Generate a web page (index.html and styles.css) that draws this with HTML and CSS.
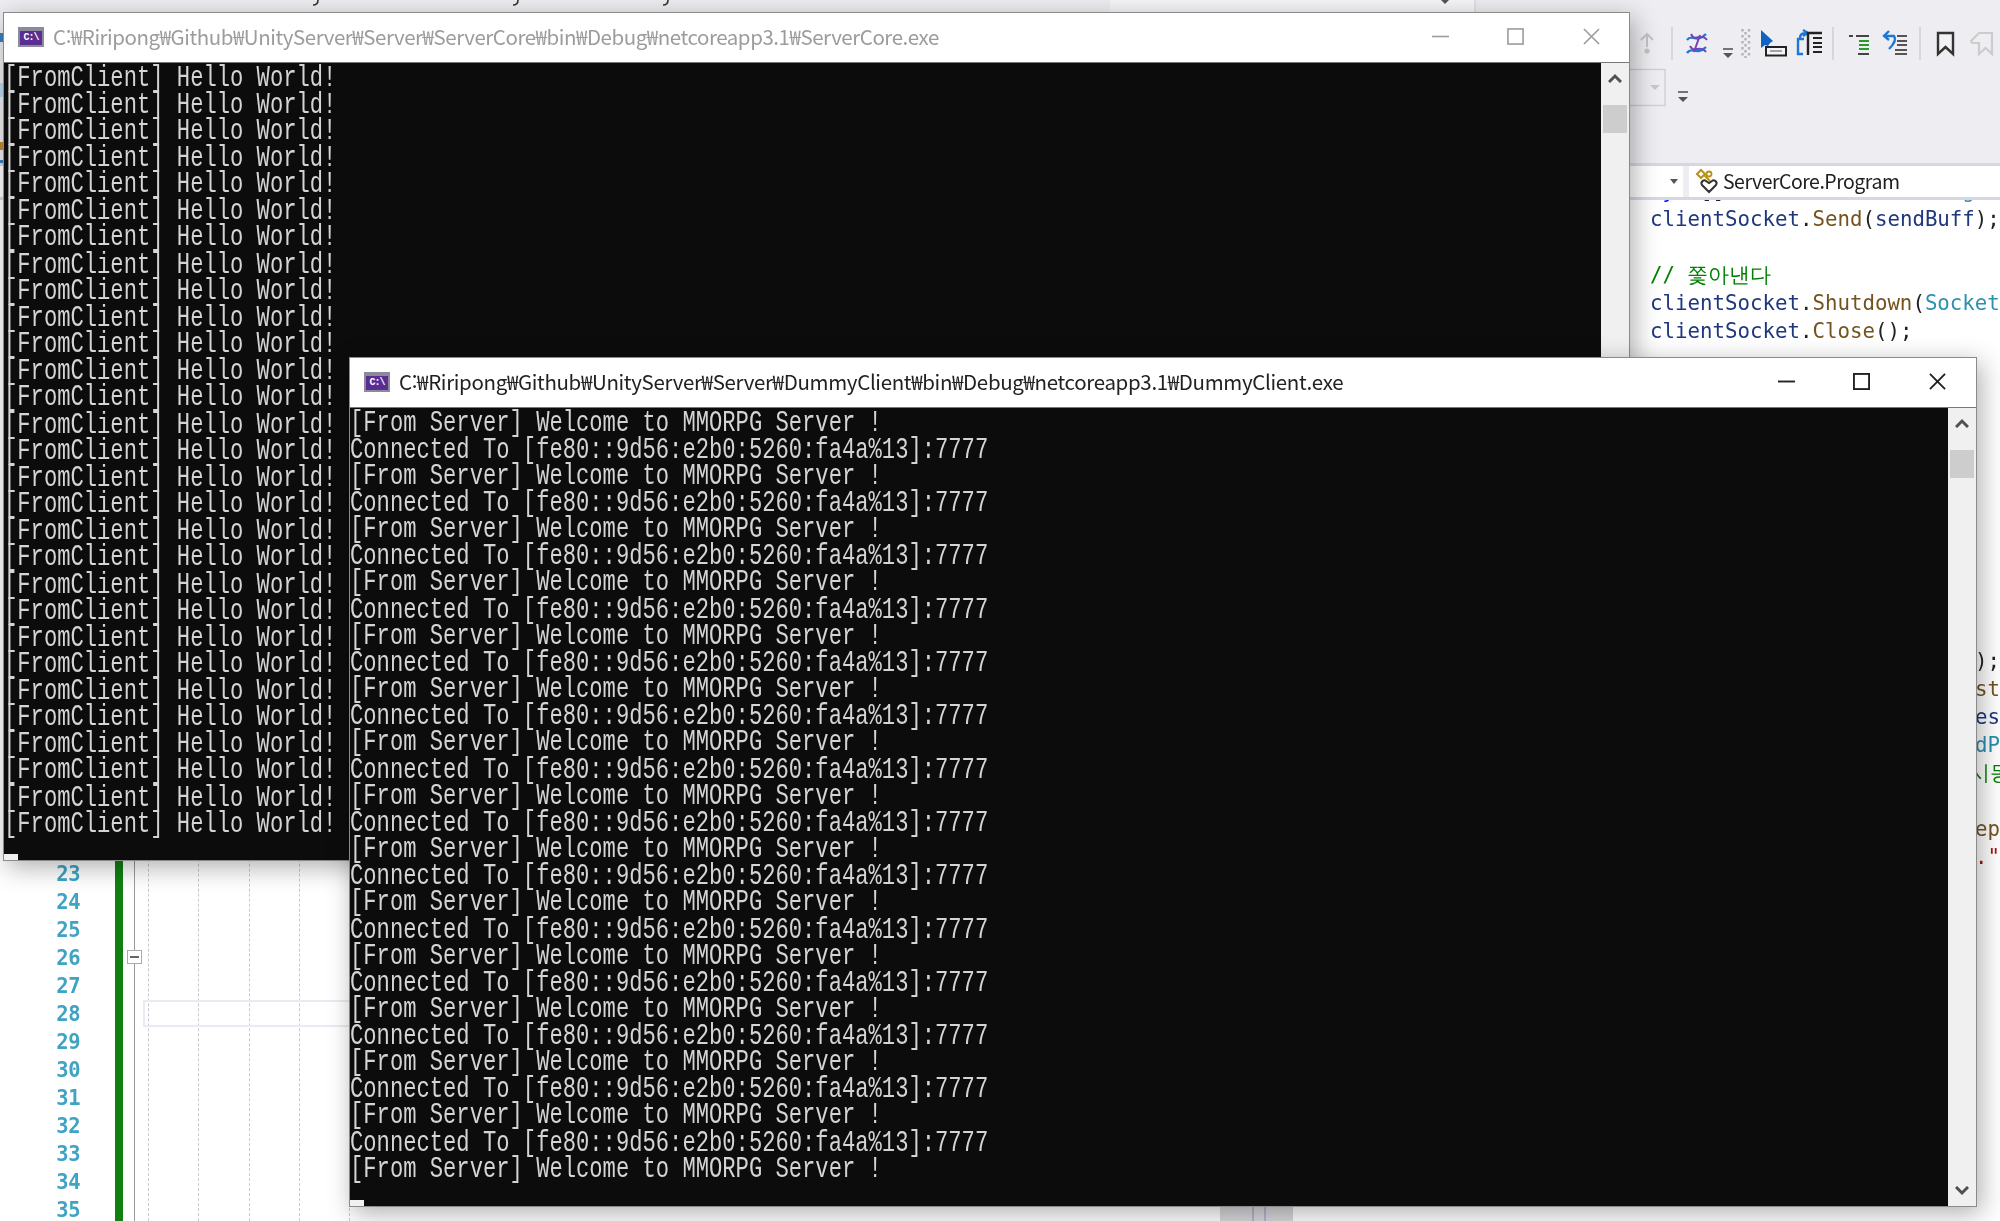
FILE: index.html
```html
<!DOCTYPE html>
<html lang="ko">
<head>
<meta charset="utf-8">
<title>ServerCore and DummyClient</title>
<link rel="stylesheet" href="styles.css">
</head>
<body>
<div class="ide">
  <svg class="menu-strip" viewBox="0 0 2000 12" aria-hidden="true">
    <rect x="1110" y="0" width="365" height="12" fill="#f6f6f8"/>
    <line x1="1475" y1="0" x2="1475" y2="12" stroke="#cfd0dc"/>
    <path d="M1441 0h8l-4 4z" fill="#555"/>
    <path d="M318 0c0 4-2 5-5 5M518 0c0 4-2 5-5 5M668 0c0 4-2 5-5 5" fill="none" stroke="#333" stroke-width="1.6"/>
  </svg>
  <div class="toolbars">
    <svg class="tool-icons" viewBox="1630 12 370 151" aria-hidden="true">
      <path d="M1647 47V34M1641 40l6-6 6 6" fill="none" stroke="#c4c4c8" stroke-width="2"/>
      <circle cx="1647" cy="51" r="2.6" fill="#c4c4c8"/>
      <line x1="1672" y1="27" x2="1672" y2="60" stroke="#ccced8" stroke-width="1.5"/>
      <path d="M1687 40c5-7 9 4 19-6M1687 53c5-7 10 3 19-6" fill="none" stroke="#1c78d4" stroke-width="2.4"/>
      <path d="M1691 34c4 9 10-2 16 6M1690 46c4 8 10-2 16 6M1700 35l-6 17" fill="none" stroke="#7b3fb6" stroke-width="2"/>
      <path d="M1723 49h10" stroke="#555" stroke-width="1.6"/>
      <path d="M1723 53h10l-5 5z" fill="#555"/>
      <g fill="none" stroke="#b4b4b8" stroke-width="2.4" stroke-dasharray="2.4 3.6">
        <line x1="1742.5" y1="29" x2="1742.5" y2="58"/>
        <line x1="1745.5" y1="32" x2="1745.5" y2="58"/>
        <line x1="1749" y1="29" x2="1749" y2="58"/>
      </g>
      <path d="M1761 30v18l4-3 3 1 2-3 3-2z" fill="#0e63c4"/>
      <rect x="1766" y="47" width="20" height="8.5" fill="#f4f4f6" stroke="#222" stroke-width="2"/>
      <line x1="1770" y1="51" x2="1782" y2="51" stroke="#888" stroke-width="1.5"/>
      <path d="M1804 39h-6v15h5M1800 38c0-3 2-5 6-5M1803 30l5 3-5 3" fill="none" stroke="#1c78d4" stroke-width="2.4"/>
      <path d="M1822 33h-14v22" fill="none" stroke="#222" stroke-width="2.4"/>
      <path d="M1813 38h9M1813 43h9M1813 47h9M1813 52h9" stroke="#222" stroke-width="2"/>
      <path d="M1849 36h4M1856 36h13M1858 54h11M1858 49.5h0" stroke="#444" stroke-width="2"/>
      <path d="M1859 41h10M1859 45h10M1859 49h10" stroke="#2a9a2a" stroke-width="2.2"/>
      <path d="M1885 36h9c3 4-1 9-5 13M1889 31l-5 5 5 4" fill="none" stroke="#1c78d4" stroke-width="2.4"/>
      <path d="M1897 36h10M1897 41h10M1897 45h10M1895 50h12M1895 54h12" stroke="#555" stroke-width="1.9"/>
      <line x1="1833" y1="27" x2="1833" y2="60" stroke="#ccced8" stroke-width="1.5"/>
      <line x1="1920" y1="27" x2="1920" y2="60" stroke="#ccced8" stroke-width="1.5"/>
      <path d="M1938 33h15v21l-7.5-7-7.500 7z" fill="#f2f2f5" stroke="#333" stroke-width="2.4"/>
      <path d="M1979 33h13v21l-6.500-6-6.500 6V43h-7l-1-2z" fill="none" stroke="#ccc" stroke-width="2.2"/>
      <rect x="1625" y="69.500" width="40" height="36" fill="none" stroke="#ccced8" stroke-width="1.4"/>
      <path d="M1650 85h10l-5 5z" fill="#c4c8d4"/>
      <path d="M1678 92h10" stroke="#555" stroke-width="1.6"/>
      <path d="M1678 97h10l-5 5z" fill="#555"/>
    </svg>
  </div>
  <div class="navbar">
    <div class="nav-cell nav-left"><span class="nav-caret"></span></div>
    <div class="nav-cell nav-right">
      <svg class="nav-icon" viewBox="0 0 24 26" aria-hidden="true">
        <path d="M2 6l4-4 4 4-4 4zM9 7l6 6" fill="none" stroke="#b8901c" stroke-width="2"/>
        <circle cx="14" cy="6" r="2.500" fill="none" stroke="#b8901c" stroke-width="1.800"/>
        <path d="M14 24l-7-7c-2-3 2-6 4-4l3 2 3-2c2-2 6 1 4 4z" fill="#fff" stroke="#333" stroke-width="2"/>
      </svg>
      <span class="nav-label">ServerCore.Program</span>
    </div>
  </div>
  <div class="editor">
    <div class="gutter">
      <div class="ln">23</div><div class="ln">24</div><div class="ln">25</div><div class="ln">26</div><div class="ln">27</div><div class="ln">28</div><div class="ln">29</div><div class="ln">30</div><div class="ln">31</div><div class="ln">32</div><div class="ln">33</div><div class="ln">34</div><div class="ln">35</div>
    </div>
    <div class="changebar"></div>
    <div class="fold"><span class="fold-box"></span></div>
    <div class="guides">
      <div class="guide"></div><div class="guide"></div><div class="guide"></div><div class="guide"></div><div class="guide guide-last"></div>
      <div class="current-line"></div>
    </div>
    <div class="splitter"><span class="split-line"></span><span class="split-line"></span></div>
    <div class="code">
      <div class="code-head">
        <div class="cl-clip"><span><span class="k">byte</span>[] <span class="v">sendBuff</span> = <span class="t">Encoding</span></span></div>
        <div class="cl"><span class="v">clientSocket</span>.<span class="m">Send</span>(<span class="v">sendBuff</span>);</div>
        <div class="cl"></div>
        <div class="cl c">// 쫓아낸다</div>
        <div class="cl"><span class="v">clientSocket</span>.<span class="m">Shutdown</span>(<span class="t">Socket</span></div>
        <div class="cl"><span class="v">clientSocket</span>.<span class="m">Close</span>();</div>
      </div>
      <div class="code-tail">
        <div class="cl">);</div>
        <div class="cl m">st</div>
        <div class="cl v">es</div>
        <div class="cl t">dP</div>
        <div class="cl c cl-kr">시동</div>
        <div class="cl"></div>
        <div class="cl m">ep</div>
        <div class="cl s">."</div>
      </div>
    </div>
  </div>
</div>

<section class="console win-server">
  <header class="titlebar">
    <span class="cmd-icon"><span class="cmd-glyph">C:\</span></span>
    <span class="win-title">C:₩Riripong₩Github₩UnityServer₩Server₩ServerCore₩bin₩Debug₩netcoreapp3.1₩ServerCore.exe</span>
    <div class="win-controls">
      <span class="win-btn"><svg viewBox="0 0 18 18" aria-hidden="true"><path d="M0 9h18"/></svg></span>
      <span class="win-btn"><svg viewBox="0 0 18 18" aria-hidden="true"><rect x="1" y="1" width="16" height="16"/></svg></span>
      <span class="win-btn"><svg viewBox="0 0 18 18" aria-hidden="true"><path d="M1 1l16 16M17 1L1 17"/></svg></span>
    </div>
  </header>
  <div class="win-body">
    <div class="screen">
      <div class="log">
        <div>[FromClient] Hello World!</div><div>[FromClient] Hello World!</div><div>[FromClient] Hello World!</div><div>[FromClient] Hello World!</div><div>[FromClient] Hello World!</div><div>[FromClient] Hello World!</div><div>[FromClient] Hello World!</div><div>[FromClient] Hello World!</div><div>[FromClient] Hello World!</div><div>[FromClient] Hello World!</div><div>[FromClient] Hello World!</div><div>[FromClient] Hello World!</div><div>[FromClient] Hello World!</div><div>[FromClient] Hello World!</div><div>[FromClient] Hello World!</div><div>[FromClient] Hello World!</div><div>[FromClient] Hello World!</div><div>[FromClient] Hello World!</div><div>[FromClient] Hello World!</div><div>[FromClient] Hello World!</div><div>[FromClient] Hello World!</div><div>[FromClient] Hello World!</div><div>[FromClient] Hello World!</div><div>[FromClient] Hello World!</div><div>[FromClient] Hello World!</div><div>[FromClient] Hello World!</div><div>[FromClient] Hello World!</div><div>[FromClient] Hello World!</div><div>[FromClient] Hello World!</div>
      </div>
      <span class="hthumb"></span>
    </div>
    <div class="scrollbar">
      <span class="sb-arrow"><svg viewBox="0 0 14 10" aria-hidden="true"><path d="M1 9l6-6 6 6"/></svg></span>
      <span class="sb-thumb"></span>
      <span class="sb-track"></span>
      <span class="sb-arrow"><svg viewBox="0 0 14 10" aria-hidden="true"><path d="M1 1l6 6 6-6"/></svg></span>
    </div>
  </div>
</section>

<section class="console win-client">
  <header class="titlebar">
    <span class="cmd-icon"><span class="cmd-glyph">C:\</span></span>
    <span class="win-title">C:₩Riripong₩Github₩UnityServer₩Server₩DummyClient₩bin₩Debug₩netcoreapp3.1₩DummyClient.exe</span>
    <div class="win-controls">
      <span class="win-btn"><svg viewBox="0 0 18 18" aria-hidden="true"><path d="M0 9h18"/></svg></span>
      <span class="win-btn"><svg viewBox="0 0 18 18" aria-hidden="true"><rect x="1" y="1" width="16" height="16"/></svg></span>
      <span class="win-btn"><svg viewBox="0 0 18 18" aria-hidden="true"><path d="M1 1l16 16M17 1L1 17"/></svg></span>
    </div>
  </header>
  <div class="win-body">
    <div class="screen">
      <div class="log">
        <div>[From Server] Welcome to MMORPG Server !</div><div>Connected To [fe80::9d56:e2b0:5260:fa4a%13]:7777</div><div>[From Server] Welcome to MMORPG Server !</div><div>Connected To [fe80::9d56:e2b0:5260:fa4a%13]:7777</div><div>[From Server] Welcome to MMORPG Server !</div><div>Connected To [fe80::9d56:e2b0:5260:fa4a%13]:7777</div><div>[From Server] Welcome to MMORPG Server !</div><div>Connected To [fe80::9d56:e2b0:5260:fa4a%13]:7777</div><div>[From Server] Welcome to MMORPG Server !</div><div>Connected To [fe80::9d56:e2b0:5260:fa4a%13]:7777</div><div>[From Server] Welcome to MMORPG Server !</div><div>Connected To [fe80::9d56:e2b0:5260:fa4a%13]:7777</div><div>[From Server] Welcome to MMORPG Server !</div><div>Connected To [fe80::9d56:e2b0:5260:fa4a%13]:7777</div><div>[From Server] Welcome to MMORPG Server !</div><div>Connected To [fe80::9d56:e2b0:5260:fa4a%13]:7777</div><div>[From Server] Welcome to MMORPG Server !</div><div>Connected To [fe80::9d56:e2b0:5260:fa4a%13]:7777</div><div>[From Server] Welcome to MMORPG Server !</div><div>Connected To [fe80::9d56:e2b0:5260:fa4a%13]:7777</div><div>[From Server] Welcome to MMORPG Server !</div><div>Connected To [fe80::9d56:e2b0:5260:fa4a%13]:7777</div><div>[From Server] Welcome to MMORPG Server !</div><div>Connected To [fe80::9d56:e2b0:5260:fa4a%13]:7777</div><div>[From Server] Welcome to MMORPG Server !</div><div>Connected To [fe80::9d56:e2b0:5260:fa4a%13]:7777</div><div>[From Server] Welcome to MMORPG Server !</div><div>Connected To [fe80::9d56:e2b0:5260:fa4a%13]:7777</div><div>[From Server] Welcome to MMORPG Server !</div>
      </div>
      <span class="hthumb"></span>
    </div>
    <div class="scrollbar">
      <span class="sb-arrow"><svg viewBox="0 0 14 10" aria-hidden="true"><path d="M1 9l6-6 6 6"/></svg></span>
      <span class="sb-thumb"></span>
      <span class="sb-track"></span>
      <span class="sb-arrow"><svg viewBox="0 0 14 10" aria-hidden="true"><path d="M1 1l6 6 6-6"/></svg></span>
    </div>
  </div>
</section>
</body>
</html>
```
FILE: styles.css
```css
* { box-sizing: border-box; }
html, body { margin: 0; padding: 0; }
body {
  width: 2000px;
  height: 1221px;
  overflow: hidden;
  position: relative;
  background: #eeeef2;
  font-family: "Noto Sans CJK KR", "Noto Sans", sans-serif;
}

/* IDE behind the consoles */
.ide { display: flex; flex-direction: column; width: 100%; height: 100%; }
.menu-strip { display: block; width: 2000px; height: 12px; flex: none; }
.toolbars {
  flex: none;
  height: 151px;
  padding-left: 1630px;
  background:
    linear-gradient(#3a7fc0, #3a7fc0) 0 21px / 3px 9px no-repeat,
    linear-gradient(#bcdcf0, #bcdcf0) 0 71px / 3px 14px no-repeat,
    linear-gradient(#c08a3a, #c08a3a) 0 130px / 3px 8px no-repeat,
    linear-gradient(#3a7fc0, #3a7fc0) 0 148px / 3px 3px no-repeat;
}
.tool-icons { display: block; width: 370px; height: 151px; filter: blur(0.4px); }

.navbar {
  flex: none;
  display: flex;
  height: 37px;
  border-top: 3px solid #d6d7e2;
  border-bottom: 3px solid #d6d7e2;
  background: #eeeef2;
  gap: 6px;
}
.nav-cell { background: #fff; display: flex; align-items: center; }
.nav-left { width: 1683px; justify-content: flex-end; padding-right: 5px; }
.nav-caret { width: 0; height: 0; border: 4.5px solid transparent; border-top: 5px solid #555; border-bottom: 0; }
.nav-right { flex: 1; padding: 0 0 2px 6px; gap: 4px; }
.nav-icon { width: 24px; height: 26px; flex: none; filter: blur(0.3px); }
.nav-label { font-size: 19.500px; letter-spacing: -0.5px; color: #1e1e1e; filter: blur(0.3px); }

.editor { flex: 1; display: flex; background: #fff; min-height: 0; }
.gutter { flex: none; width: 115px; padding: 660px 35px 0 0; }
.ln {
  height: 28px;
  text-align: right;
  font: 700 20.500px/28px "DejaVu Sans Mono", monospace;
  letter-spacing: -0.5px;
  color: #3fa3c4;
  filter: blur(0.3px);
}
.changebar { flex: none; width: 8px; background: #108010; }
.fold { flex: none; width: 25px; position: relative; background: linear-gradient(#999, #999) 11px 0 / 1px 100% no-repeat; }
.fold-box {
  position: absolute;
  left: 4px;
  top: 750px;
  width: 15px;
  height: 14px;
  background: #fff linear-gradient(#666, #666) center / 9px 2px no-repeat;
  border: 1px solid #aaa;
}
.guides { flex: none; width: 1072px; display: flex; position: relative; }
.guide { width: 50.250px; border-left: 1px dashed #c9c9c9; }
.guide-last { width: auto; }
.current-line {
  position: absolute;
  left: -5px;
  top: 800px;
  width: 210px;
  height: 27px;
  border: 2px solid #eaeaf2;
}
.splitter { flex: none; width: 73px; background: #d8d8dc; display: flex; gap: 10px; padding-left: 32px; }
.split-line { width: 2px; height: 100%; background: #b4b4cc; }

.code {
  flex: 1;
  display: flex;
  flex-direction: column;
  padding-left: 357px;
  font: 20.750px/28px "DejaVu Sans Mono", monospace;
  color: #222;
  filter: blur(0.3px);
  overflow: hidden;
}
.code-head { flex: none; }
.code-tail { flex: none; margin-top: 302px; text-align: right; }
.cl { height: 28px; white-space: pre; }
.cl-clip { height: 5px; overflow: hidden; display: flex; align-items: flex-end; white-space: pre; }
.cl-kr { margin-right: -11px; }
.k { color: #0000ff; }
.v { color: #1f377f; }
.m { color: #74531f; }
.t { color: #2b91af; }
.c { color: #008000; }
.s { color: #a31515; }

/* Console windows on the desktop */
.console {
  position: absolute;
  display: flex;
  flex-direction: column;
  background: #fff;
  border: 1px solid #8a8a8a;
  box-shadow: 4px 6px 24px rgba(0, 0, 0, 0.32);
}
.win-server { left: 3px; top: 12px; width: 1627px; height: 849px; color: #9c9c9c; }
.win-client { left: 349px; top: 357px; width: 1628px; height: 850px; color: #222; }

.titlebar { flex: none; height: 49px; display: flex; align-items: center; padding: 0 0 2px 14px; }
.cmd-icon {
  flex: none;
  width: 26px;
  height: 20px;
  background: #5b2c91;
  border: 2px solid #8a8a9a;
  border-top-width: 4px;
  display: flex;
  align-items: center;
  justify-content: center;
}
.cmd-glyph { font: 700 10px/1 "Liberation Mono", monospace; color: #fff; letter-spacing: -1px; }
.win-title { margin: 0 0 2px 9px; font-size: 20.500px; white-space: nowrap; letter-spacing: -0.450px; filter: blur(0.3px); }
.win-client .win-title { letter-spacing: -0.340px; }
.win-controls { margin-left: auto; display: flex; }
.win-client .win-controls { margin-right: 1px; }
.win-btn { width: 75.500px; display: flex; justify-content: center; }
.win-btn svg { width: 17px; height: 17px; fill: none; stroke: currentColor; stroke-width: 1.700; }
.win-client .win-btn svg { stroke-width: 2; }

.win-body { flex: 1; display: flex; min-height: 0; border-top: 1px solid #777; }
.screen { flex: 1; position: relative; background: #0c0c0c; overflow: hidden; padding-top: 3px; }
.log {
  width: 900px;
  color: #d4d4d4;
  font: 22.170px/20.510px "Liberation Mono", monospace;
  transform: scaleY(1.300);
  transform-origin: 0 0;
  filter: blur(0.35px);
}
.log div { white-space: pre; height: 20.510px; }
.hthumb { position: absolute; left: 0; bottom: 0; width: 14px; height: 6px; background: #f0f0f0; }

.scrollbar { flex: none; width: 28px; background: #f0f0f0; display: flex; flex-direction: column; align-items: stretch; }
.sb-arrow { flex: none; height: 30px; display: flex; align-items: center; justify-content: center; }
.sb-arrow svg { width: 14px; height: 10px; fill: none; stroke: #505050; stroke-width: 3; }
.sb-thumb { flex: none; height: 28px; margin: 12px 2px 0; background: #cdcdcd; }
.sb-track { flex: 1; }
```
